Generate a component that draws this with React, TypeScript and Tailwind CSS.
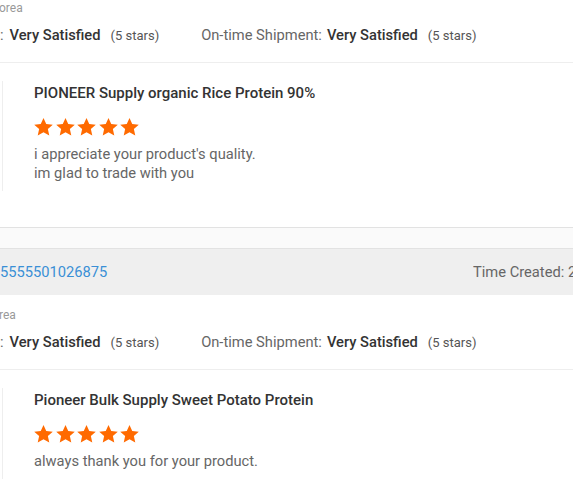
import React from 'react';

const font = { fontFamily: 'Roboto, "Liberation Sans", sans-serif' };

function Star() {
  return (
    <svg viewBox="0 0 20 19" className="w-[19px] h-[18px]">
      <polygon
        points="10,0 12.9,6.3 19.8,7 14.6,11.6 16.1,18.6 10,15 3.9,18.6 5.4,11.6 0.2,7 7.1,6.3"
        fill="#ff6a00"
      />
    </svg>
  );
}

function Stars() {
  return (
    <div className="flex gap-[2.5px]">
      {[0, 1, 2, 3, 4].map((i) => (
        <Star key={i} />
      ))}
    </div>
  );
}

interface Review {
  country: string;
  title: string;
  comment: string[];
}

function Feedback({ review }: { review: Review }) {
  return (
    <div>
      {/* buyer country + ratings */}
      <div className="text-[12px] leading-[16px] text-[#999] -ml-[1px]">{review.country}</div>
      <div className="mt-[9px] flex items-baseline text-[14.7px] leading-[20px] text-[#666] whitespace-nowrap">
        <span>:</span>
        <span className="ml-[6px] font-medium text-[#333]">Very Satisfied</span>
        <span className="ml-[10px] text-[13px] text-[#555]">(5 stars)</span>
        <span className="ml-[42px]">On-time Shipment: </span>
        <span className="ml-[5px] font-medium text-[#333]">Very Satisfied</span>
        <span className="ml-[10px] text-[13px] text-[#555]">(5 stars)</span>
      </div>
      <div className="mt-[16px] border-b border-[#eee]" />

      {/* product review box */}
      <div className="mt-[18px] ml-[2px] border-l border-[#eee] pl-[31px] pt-[2px] pb-[8px]">
        <div className="text-[15px] leading-[20px] font-medium text-[#333]">{review.title}</div>
        <div className="mt-[15px]">
          <Stars />
        </div>
        <div className="mt-[9px] text-[14.7px] leading-[19px] text-[#666]">
          {review.comment.map((c, i) => (
            <div key={i}>{c}</div>
          ))}
        </div>
      </div>
    </div>
  );
}

export default function App() {
  return (
    <div className="w-[573px] h-[488px] overflow-hidden bg-white" style={font}>
      <Feedback
        review={{
          country: 'orea',
          title: 'PIONEER Supply organic Rice Protein 90%',
          comment: ["i appreciate your product's quality.", 'im glad to trade with you'],
        }}
      />

      <div className="mt-[36px] border-t border-[#e2e2e2] bg-[#fafafa] h-[21px]" />
      <div className="border-t border-[#e2e2e2] bg-[#efefef] h-[47px] flex items-center text-[14.7px] whitespace-nowrap">
        <span className="text-[#3a8fd6]">5555501026875</span>
        <span className="ml-auto w-[100px] shrink-0 overflow-hidden text-[#666]">Time Created: 2019-05-20</span>
      </div>

      <div className="mt-[12px]">
        <Feedback
          review={{
            country: 'rea',
            title: 'Pioneer Bulk Supply Sweet Potato Protein',
            comment: ['always thank you for your product.'],
          }}
        />
      </div>
    </div>
  );
}
